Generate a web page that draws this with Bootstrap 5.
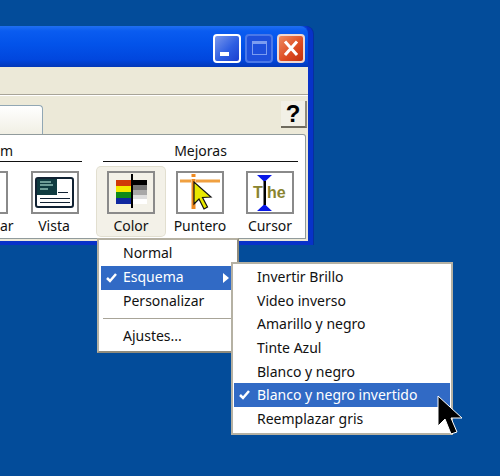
<!DOCTYPE html>
<html lang="es">
<head>
    <meta charset="UTF-8">
    <meta name="viewport" content="width=device-width, initial-scale=1.0">
    <title>Mejoras - Esquema</title>
    <link href="https://cdn.jsdelivr.net/npm/bootstrap@5.3.0/dist/css/bootstrap.min.css" rel="stylesheet">
    <style>
        html, body { height: 100%; }
        body {
            background: #034c9a;
            font-family: "Noto Sans", sans-serif;
            font-size: 14px;
            color: #111;
            overflow: hidden;
            position: relative;
        }
        .xp-window {
            position: absolute;
            left: 0; top: 26px;
            width: 313px; height: 219px;
            background: #0a3fd0;
            border-right: 5px solid #0832c8;
            border-bottom: 4px solid #0832c8;
            border-top-right-radius: 8px;
            box-shadow: 1px 0 0 #06309c;
        }
        .xp-title {
            height: 41px;
            padding: 8px 3px 0 0;
            background: linear-gradient(180deg, #1f6ff2 0, #0a5cf0 5px, #0353ea 18px, #0146dd 34px, #0338b8 41px);
            border-top-right-radius: 8px;
        }
        .cap-btn {
            width: 28px; height: 29px;
            border: 2px solid #fff;
            border-radius: 4px;
            background: linear-gradient(135deg, #7a98ec 0, #2f5fe2 55%, #1b3fd0 100%);
        }
        .cap-btn.cap-off { border-color: #4a78e8; background: #1f50dc; }
        .cap-btn.cap-close { border-color: #f0d8d0; background: linear-gradient(135deg, #ee8a60 0, #dc4a20 60%, #c03010 100%); }
        .xp-client { background: #ece9d8; height: 174px; }
        .xp-menubar { height: 28px; border-bottom: 1px solid #a8a498; box-shadow: 0 1px 0 #fff; }
        .xp-tabrow { height: 39px; padding-top: 10px; }
        .xp-tab {
            width: 43px; height: 29px;
            background: linear-gradient(180deg, #fff, #f1efe4);
            border: 1px solid #91a7b4;
            border-left: 0; border-bottom: 0;
            border-top-right-radius: 4px;
        }
        .help-btn {
            width: 26px; height: 27px;
            margin-top: -4px; margin-right: 1px;
            padding: 0;
            background: #f2f0e6;
            border: 0;
            border-right: 2px solid #8f8b7c;
            border-bottom: 2px solid #6f6b5e;
            border-radius: 0;
            font: bold 24px/25px "Liberation Sans", sans-serif;
            color: #000;
        }
        .xp-panel {
            height: 105px;
            margin-right: 2px;
            background: #fff;
            border: 1px solid #919b9c;
            border-left: 0;
            border-top-right-radius: 3px;
        }
        .grp-left { width: 82px; }
        .grp-right { width: 208px; margin-left: 15px; }
        .grp-head {
            height: 27px;
            line-height: 32px;
            border-bottom: 1px solid #111;
            text-align: center;
        }
        .grp-left .grp-head { text-align: left; }
        .grp-right .grp-head { margin: 0 7px 0 6px; }
        .tool-btn {
            width: 70px;
            height: 69px;
            padding-top: 9px;
            text-align: center;
            line-height: 17px;
        }
        .tool-btn svg { display: block; margin: 0 auto 3px; }
        .tool-hot {
            width: 68px;
            margin-top: 5px;
            height: 69px;
            padding-top: 4px;
            background: #f3f1e8;
            border-radius: 4px;
            box-shadow: 0 0 0 1px #e2dfd0;
        }
        .tool-cut { width: 24px; padding-top: 9px; line-height: 17px; }
        .tool-cut span { display: block; width: 8px; height: 43px; margin-bottom: 3px; border: 2px solid #8a8a8a; border-left: 0; }
        .tool-view { width: 58px; padding-left: 2px; }
        .tool-view.tool-btn svg { margin-left: 5px; }
        .xp-menu {
            position: absolute;
            display: block;
            min-width: 0;
            margin: 0;
            padding: 2px;
            background: #fff;
            border: 2px solid #b5b1a3;
            border-radius: 0;
            font-size: 14px;
            color: #111;
        }
        .menu-main { left: 97px; top: 238px; width: 142px; height: 115px; border-right-color: #8f8b7c; border-bottom-color: #8f8b7c; }
        .menu-sub { left: 231px; top: 262px; width: 222px; height: 173px; padding: 1px 1px; }
        .xp-menu .dropdown-item {
            position: relative;
            height: 24px;
            line-height: 22px;
            padding: 0 0 0 22px;
            color: #111;
        }
        .menu-sub .dropdown-item { height: 23.7px; padding-left: 23px; line-height: 23px; }
        .xp-menu .dropdown-item.active { background: #316ac5; color: #fff; }
        .xp-menu .dropdown-divider { margin: 4px 2px 6px; border-color: #a8a498; opacity: 1; }
        .chk { position: absolute; left: 5px; top: 7px; }
        .sub-arrow { position: absolute; right: 6px; top: 7px; }
        .xp-pointer { position: absolute; left: 436px; top: 395px; z-index: 1100; }
    </style>
</head>
<body>
    <div class="xp-window">
        <div class="xp-title d-flex justify-content-end gap-1">
            <div class="cap-btn">
                <svg width="24" height="25" viewBox="0 0 24 25"><rect x="5" y="16" width="9" height="4" fill="#fff"/></svg>
            </div>
            <div class="cap-btn cap-off">
                <svg width="24" height="25" viewBox="0 0 24 25"><rect x="5.500" y="5.500" width="14" height="13" fill="none" stroke="#7c9cf0"/><rect x="5" y="5" width="15" height="3" fill="#7c9cf0"/></svg>
            </div>
            <div class="cap-btn cap-close">
                <svg width="24" height="25" viewBox="0 0 24 25"><path d="M6 5.500 18 19M18 5.500 6 19" stroke="#fff" stroke-width="3" fill="none"/></svg>
            </div>
        </div>
        <div class="xp-client">
            <div class="xp-menubar"></div>
            <div class="xp-tabrow d-flex justify-content-between">
                <div class="xp-tab"></div>
                <button type="button" class="btn help-btn">?</button>
            </div>
            <div class="xp-panel d-flex">
                <div class="grp-left">
                    <div class="grp-head">m</div>
                    <div class="d-flex">
                        <div class="tool-cut"><span></span>ar</div>
                        <div class="tool-btn tool-view">
                            <svg width="48" height="43" viewBox="0 0 48 43">
                                <rect x="1" y="1" width="46" height="41" fill="#fff" stroke="#8a8a8a" stroke-width="2"/>
                                <rect x="5" y="7" width="37" height="29" rx="2" fill="#fff" stroke="#123" stroke-width="2"/>
                                <rect x="6" y="8" width="20" height="16" fill="#0f3b40"/>
                                <path d="M9 11h11M9 14h13M9 18h8" stroke="#cfe" stroke-width="1"/>
                                <path d="M27 21.500h10M9 27.500h30M9 31.500h30" stroke="#123" stroke-width="1.200"/>
                            </svg>
                            Vista
                        </div>
                    </div>
                </div>
                <div class="grp-right">
                    <div class="grp-head">Mejoras</div>
                    <div class="d-flex">
                        <div class="tool-btn tool-hot">
                            <svg width="48" height="43" viewBox="0 0 48 43">
                                <rect x="1" y="1" width="46" height="41" fill="#f3f1e8" stroke="#8a8a8a" stroke-width="2"/>
                                <rect x="9" y="9" width="16" height="6" fill="#d03a08"/>
                                <rect x="9" y="15" width="16" height="6" fill="#f4ea00"/>
                                <rect x="9" y="21" width="16" height="6" fill="#0f8a18"/>
                                <rect x="9" y="27" width="16" height="6" fill="#1028a0"/>
                                <rect x="26" y="9" width="14" height="5" fill="#000"/>
                                <rect x="26" y="14" width="14" height="5" fill="#777"/>
                                <rect x="26" y="19" width="14" height="5" fill="#a8a8a8"/>
                                <rect x="26" y="24" width="14" height="4" fill="#ddd"/>
                                <rect x="26" y="28" width="14" height="5" fill="#fff"/>
                                <rect x="24" y="3" width="2" height="34" fill="#000"/>
                            </svg>
                            Color
                        </div>
                        <div class="tool-btn">
                            <svg width="48" height="43" viewBox="0 0 48 43">
                                <rect x="1" y="1" width="46" height="41" fill="#fff" stroke="#8a8a8a" stroke-width="2"/>
                                <path d="M4 10h11M20 10h24" stroke="#f0a040" stroke-width="3"/>
                                <path d="M17.500 3v3M17.500 8v30" stroke="#ef8a20" stroke-width="4"/>
                                <path d="M18 11v22l5-5 5 10 3.500-2-5-9.500 8.500-.5z" fill="#e8e800" stroke="#111" stroke-width="1.200"/>
                            </svg>
                            Puntero
                        </div>
                        <div class="tool-btn">
                            <svg width="48" height="43" viewBox="0 0 48 43">
                                <rect x="1" y="1" width="46" height="41" fill="#fff" stroke="#8a8a8a" stroke-width="2"/>
                                <path d="M11 4h15l-7.500 7zM11 40h15l-7.500-7z" fill="#0818e8"/>
                                <rect x="17.500" y="10" width="2.500" height="24" fill="#000"/>
                                <text x="7" y="27" font-family="Liberation Sans" font-weight="700" font-size="16" fill="#8a8430">T</text>
                                <text x="21" y="27" font-family="Liberation Sans" font-weight="700" font-size="16" fill="#8a8430">he</text>
                            </svg>
                            Cursor
                        </div>
                    </div>
                </div>
            </div>
        </div>
    </div>

    <div class="dropdown-menu xp-menu menu-main">
        <a class="dropdown-item" href="#">Normal</a>
        <a class="dropdown-item active" href="#">
            <svg class="chk" width="11" height="10" viewBox="0 0 11 10"><path d="M1 5l3 3 6-7" fill="none" stroke="#fff" stroke-width="2.500"/></svg>
            Esquema
            <svg class="sub-arrow" width="6" height="10" viewBox="0 0 6 10"><path d="M0 0l6 5-6 5z" fill="#fff"/></svg>
        </a>
        <a class="dropdown-item" href="#">Personalizar</a>
        <hr class="dropdown-divider">
        <a class="dropdown-item" href="#">Ajustes...</a>
    </div>

    <div class="dropdown-menu xp-menu menu-sub">
        <a class="dropdown-item" href="#">Invertir Brillo</a>
        <a class="dropdown-item" href="#">Video inverso</a>
        <a class="dropdown-item" href="#">Amarillo y negro</a>
        <a class="dropdown-item" href="#">Tinte Azul</a>
        <a class="dropdown-item" href="#">Blanco y negro</a>
        <a class="dropdown-item active" href="#">
            <svg class="chk" width="11" height="10" viewBox="0 0 11 10"><path d="M1 5l3 3 6-7" fill="none" stroke="#fff" stroke-width="2.500"/></svg>
            Blanco y negro invertido
        </a>
        <a class="dropdown-item" href="#">Reemplazar gris</a>
    </div>

    <svg class="xp-pointer" width="28" height="42" viewBox="0 0 28 42">
        <path d="M2 1v30l7-7 6 15 6-2-6-14h11z" fill="#000" stroke="#fff" stroke-width="1"/>
    </svg>

    <script src="https://cdn.jsdelivr.net/npm/bootstrap@5.3.0/dist/js/bootstrap.bundle.min.js"></script>
</body>
</html>
